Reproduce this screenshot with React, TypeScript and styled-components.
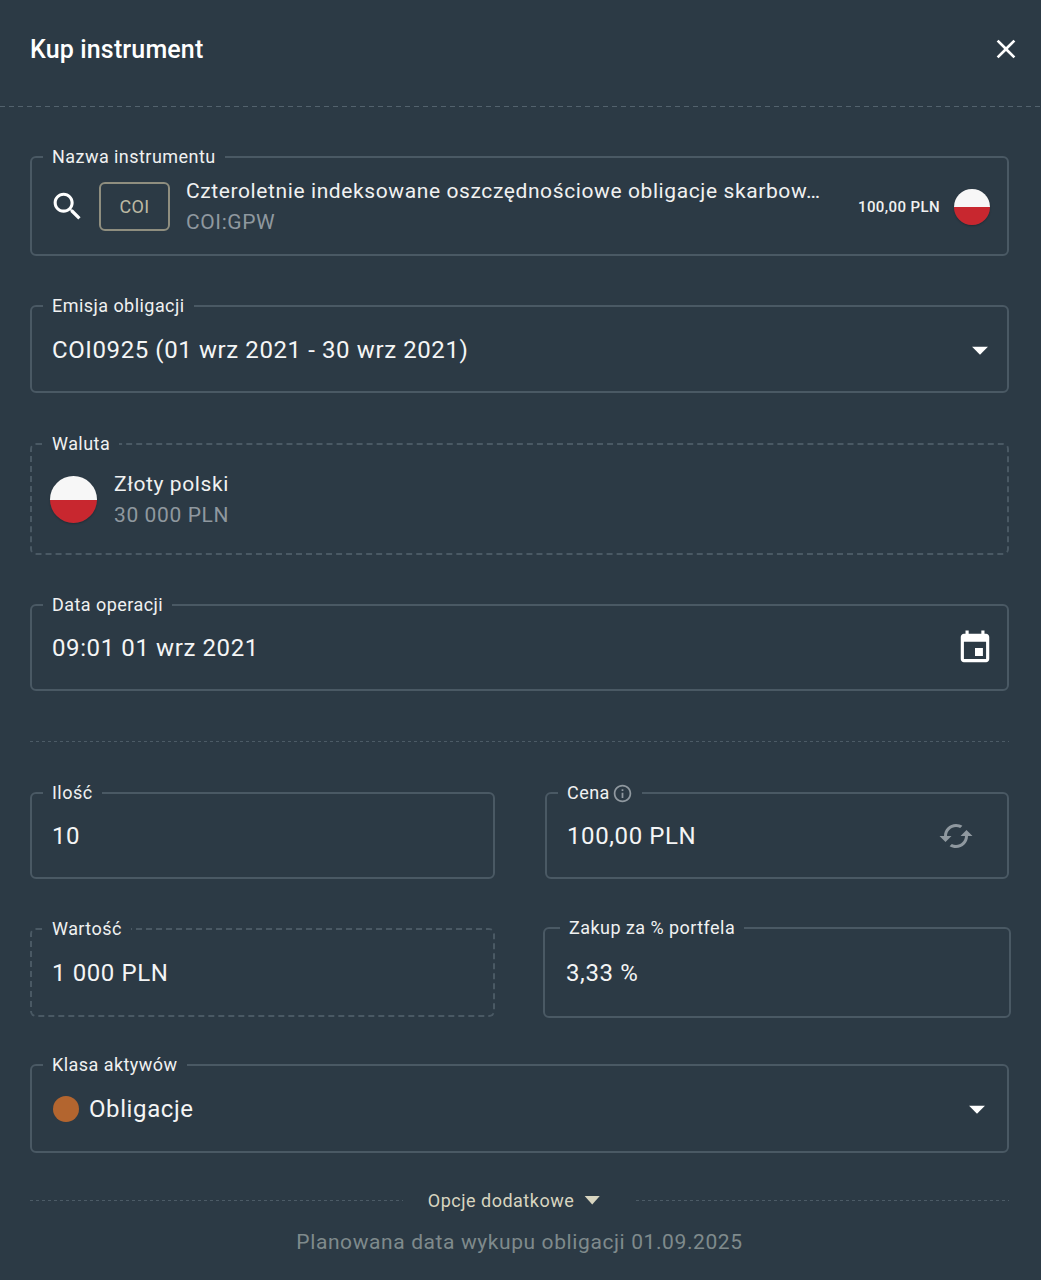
import React from 'react';
import styled, { createGlobalStyle } from 'styled-components';

const GlobalStyle = createGlobalStyle`
  html, body {
    margin: 0;
    padding: 0;
    background: #2c3a45;
  }
  * {
    box-sizing: border-box;
  }
`;

const Page = styled.div`
  width: 1041px;
  height: 1280px;
  overflow: hidden;
  background: #2c3a45;
  color: #f4f5f5;
  font-family: Roboto, 'Liberation Sans', sans-serif;
`;

const Header = styled.header`
  height: 106px;
  padding: 0 19px 8px 30px;
  display: flex;
  align-items: center;
  justify-content: space-between;
`;

const Title = styled.h1`
  margin: 1px 0 0;
  font-size: 25px;
  line-height: 30px;
  font-weight: 500;
  letter-spacing: 0.15px;
  color: #ffffff;
`;

const CloseButton = styled.button`
  width: 32px;
  height: 32px;
  padding: 0;
  border: 0;
  background: none;
  color: #ffffff;
`;

const Rule = styled.div`
  height: 1px;
  background: repeating-linear-gradient(to right, #53626d 0 5px, transparent 5px 9px);
`;

const Form = styled.main`
  padding: 40px 32px 0 30px;
  display: flex;
  flex-direction: column;
`;

const Field = styled.fieldset<{ $dashed?: boolean; $gap?: number }>`
  margin: 0 0 ${(p) => p.$gap ?? 40}px;
  min-width: 0;
  width: auto;
  padding: 0 0 8px;
  border: 2px ${(p) => (p.$dashed ? 'dashed' : 'solid')} #4a5964;
  border-radius: 6px;
`;

const WideField = styled(Field)`
  margin: -1px -2px 37px;
`;

const Legend = styled.legend`
  margin-left: 11px;
  padding: 0 9px;
  height: 20px;
  font-size: 18px;
  line-height: 20px;
  letter-spacing: 0.45px;
  color: #f0f1f1;
  display: flex;
  align-items: center;
  gap: 2px;
`;

const OffsetLegend = styled(Legend)`
  margin-left: 15px;
`;

// height is the whole field minus the legend, the bottom padding and the border
const FieldBody = styled.div<{ $height: number }>`
  height: ${(p) => p.$height}px;
  padding: 0 8px 0 20px;
  display: flex;
  align-items: center;
`;

const WideBody = styled(FieldBody)`
  padding-left: 21px;
`;

const Value = styled.span`
  flex: 1;
  min-width: 0;
  font-size: 24px;
  line-height: 30px;
  letter-spacing: 0.6px;
  color: #f4f5f5;
`;

const IconSlot = styled.span<{ $color?: string; $size: number; $right?: number; $left?: number }>`
  flex: 0 0 auto;
  width: ${(p) => p.$size}px;
  height: ${(p) => p.$size}px;
  margin-left: ${(p) => p.$left ?? 0}px;
  margin-right: ${(p) => p.$right ?? 0}px;
  color: ${(p) => p.$color ?? '#ffffff'};
  display: block;
`;

const Ticker = styled.div`
  flex: 0 0 auto;
  width: 71px;
  height: 49px;
  margin-right: 16px;
  border: 2px solid #8f8e7f;
  border-radius: 6px;
  display: flex;
  align-items: center;
  justify-content: center;
  font-size: 18px;
  letter-spacing: 0.3px;
  color: #bdb9a3;
`;

const TextStack = styled.div`
  flex: 1;
  min-width: 0;
  display: flex;
  flex-direction: column;
`;

const PrimaryLine = styled.div`
  font-size: 21px;
  line-height: 31px;
  letter-spacing: 0.6px;
  color: #f0f1f1;
  white-space: nowrap;
`;

const SecondaryLine = styled.div`
  font-size: 21px;
  line-height: 31px;
  letter-spacing: 0.6px;
  color: #8f989f;
`;

const QuotePrice = styled.span`
  flex: 0 0 auto;
  margin: 0 14px 0 30px;
  font-size: 15px;
  font-weight: 500;
  letter-spacing: 0.4px;
  color: #f0f1f1;
`;

const Flag = styled.span<{ $size: number }>`
  flex: 0 0 auto;
  width: ${(p) => p.$size}px;
  height: ${(p) => p.$size}px;
  margin-right: 9px;
  border-radius: 50%;
  background: linear-gradient(#f7f7f7 0 50%, #c8272f 50% 100%);
  box-shadow: 0 1px 2px rgba(0, 0, 0, 0.25);
`;

const CurrencyFlag = styled(Flag)`
  margin: 0 17px 0 -2px;
`;

const SectionRule = styled(Rule)`
  margin: 10px 0 41px;
  background: repeating-linear-gradient(to right, #4c5b66 0 3px, transparent 3px 6px);
`;

const TwoColumns = styled.div`
  display: grid;
  grid-template-columns: 465px 464px;
  column-gap: 50px;
`;

const Dot = styled.span`
  flex: 0 0 auto;
  width: 26px;
  height: 26px;
  margin: 0 10px 0 1px;
  border-radius: 50%;
  background: #b3652f;
`;

const OptionsRow = styled.div`
  margin-top: -5px;
  height: 24px;
  display: flex;
  align-items: center;
`;

const OptionsRule = styled(Rule)`
  flex: 1;
  background: repeating-linear-gradient(to right, #4c5b66 0 3px, transparent 3px 6px);
`;

const OptionsToggle = styled.span`
  margin: 0 36px 0 25px;
  display: flex;
  align-items: center;
  font-size: 18px;
  letter-spacing: 0.5px;
  color: #d8d5c0;
`;

const Caret = styled.span`
  width: 16px;
  height: 9px;
  margin-left: 10px;
  background: #d8d5c0;
  clip-path: polygon(0 0, 100% 0, 50% 100%);
`;

const Note = styled.p`
  margin: 17px 0 0;
  text-align: center;
  font-size: 21px;
  line-height: 26px;
  letter-spacing: 0.6px;
  color: #7f8a8c;
`;

const Glyph = styled.svg`
  display: block;
  width: 100%;
  height: 100%;
  fill: currentColor;
`;

const paths = {
  close: 'M19 6.41L17.59 5 12 10.59 6.41 5 5 6.41 10.59 12 5 17.59 6.41 19 12 13.41 17.59 19 19 17.59 13.41 12z',
  search:
    'M15.5 14h-.79l-.28-.27C15.41 12.59 16 11.11 16 9.5 16 5.91 13.09 3 9.5 3S3 5.91 3 9.5 5.91 16 9.5 16c1.61 0 3.09-.59 4.23-1.57l.27.28v.79l5 4.99L20.49 19l-4.99-5zm-6 0C7.01 14 5 11.99 5 9.5S7.01 5 9.5 5 14 7.01 14 9.5 11.99 14 9.5 14z',
  event:
    'M17 12h-5v5h5v-5zM16 1v2H8V1H6v2H5c-1.11 0-1.99.9-1.99 2L3 19c0 1.1.89 2 2 2h14c1.1 0 2-.9 2-2V5c0-1.1-.9-2-2-2h-1V1h-2zm3 18H5V8h14v11z',
  info: 'M11 7h2v2h-2zm0 4h2v6h-2zm1-9C6.48 2 2 6.48 2 12s4.48 10 10 10 10-4.48 10-10S17.52 2 12 2zm0 18c-4.41 0-8-3.59-8-8s3.59-8 8-8 8 3.59 8 8-3.59 8-8 8z',
  cached:
    'M19 8l-4 4h3c0 3.31-2.69 6-6 6-1.01 0-1.97-.25-2.8-.7l-1.46 1.46C8.97 19.54 10.43 20 12 20c4.42 0 8-3.58 8-8h3l-4-4zM6 12c0-3.31 2.69-6 6-6 1.01 0 1.97.25 2.8.7l1.46-1.46C15.03 4.46 13.57 4 12 4c-4.42 0-8 3.58-8 8H1l4 4 4-4H6z',
  drop: 'M7 10l5 5 5-5z',
};

function Icon({ name }: { name: keyof typeof paths }) {
  return (
    <Glyph viewBox="0 0 24 24">
      <path d={paths[name]} />
    </Glyph>
  );
}

export default function App() {
  return (
    <Page>
      <GlobalStyle />
      <Header>
        <Title>Kup instrument</Title>
        <CloseButton>
          <Icon name="close" />
        </CloseButton>
      </Header>
      <Rule />
      <Form>
        <Field>
          <Legend>Nazwa instrumentu</Legend>
          <FieldBody $height={79}>
            <IconSlot $size={37} $left={-3} $right={13}>
              <Icon name="search" />
            </IconSlot>
            <Ticker>COI</Ticker>
            <TextStack>
              <PrimaryLine>Czteroletnie indeksowane oszczędnościowe obligacje skarbow…</PrimaryLine>
              <SecondaryLine>COI:GPW</SecondaryLine>
            </TextStack>
            <QuotePrice>100,00 PLN</QuotePrice>
            <Flag $size={36} />
          </FieldBody>
        </Field>
        <Field $gap={41}>
          <Legend>Emisja obligacji</Legend>
          <FieldBody $height={67}>
            <Value>COI0925 (01 wrz 2021 - 30 wrz 2021)</Value>
            <IconSlot $size={38}>
              <Icon name="drop" />
            </IconSlot>
          </FieldBody>
        </Field>
        <Field $dashed>
          <Legend>Waluta</Legend>
          <FieldBody $height={91}>
            <CurrencyFlag $size={47} />
            <TextStack>
              <PrimaryLine>Złoty polski</PrimaryLine>
              <SecondaryLine>30 000 PLN</SecondaryLine>
            </TextStack>
          </FieldBody>
        </Field>
        <Field>
          <Legend>Data operacji</Legend>
          <FieldBody $height={66}>
            <Value>09:01 01 wrz 2021</Value>
            <IconSlot $size={38} $right={5}>
              <Icon name="event" />
            </IconSlot>
          </FieldBody>
        </Field>
        <SectionRule />
        <TwoColumns>
          <Field>
            <Legend>Ilość</Legend>
            <FieldBody $height={66}>
              <Value>10</Value>
            </FieldBody>
          </Field>
          <Field>
            <Legend>
              Cena
              <IconSlot $size={21} $color="#8f989f">
                <Icon name="info" />
              </IconSlot>
            </Legend>
            <FieldBody $height={66}>
              <Value>100,00 PLN</Value>
              <IconSlot $size={36} $color="#8f989f" $right={25}>
                <Icon name="cached" />
              </IconSlot>
            </FieldBody>
          </Field>
          <Field $dashed $gap={38}>
            <Legend>Wartość</Legend>
            <FieldBody $height={68}>
              <Value>1 000 PLN</Value>
            </FieldBody>
          </Field>
          <WideField>
            <OffsetLegend>Zakup za % portfela</OffsetLegend>
            <WideBody $height={70}>
              <Value>3,33 %</Value>
            </WideBody>
          </WideField>
        </TwoColumns>
        <Field>
          <Legend>Klasa aktywów</Legend>
          <FieldBody $height={68}>
            <Dot />
            <Value>Obligacje</Value>
            <IconSlot $size={38} $right={3}>
              <Icon name="drop" />
            </IconSlot>
          </FieldBody>
        </Field>
        <OptionsRow>
          <OptionsRule />
          <OptionsToggle>
            Opcje dodatkowe
            <Caret />
          </OptionsToggle>
          <OptionsRule />
        </OptionsRow>
        <Note>Planowana data wykupu obligacji 01.09.2025</Note>
      </Form>
    </Page>
  );
}
